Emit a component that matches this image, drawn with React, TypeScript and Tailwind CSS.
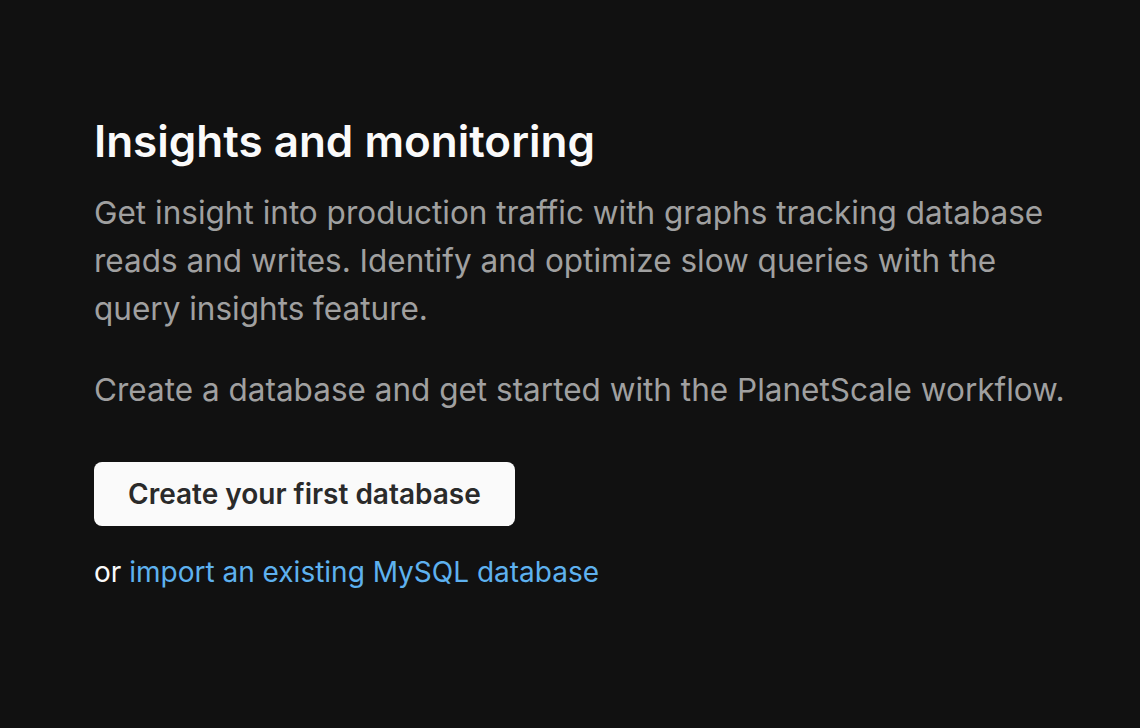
import React from "react";

export default function App() {
  return (
    <div
      className="w-[1140px] h-[728px] bg-[#111111] pl-[94px] pt-[113px]"
      style={{ fontFamily: "Inter, 'Noto Sans', sans-serif" }}
    >
      <h1 className="text-[44px] leading-[56px] font-semibold text-[#fafafa]">
        Insights and monitoring
      </h1>
      <p className="mt-[20px] w-[970px] text-[31.5px] leading-[48px] text-[#a0a0a0]">
        Get insight into production traffic with graphs tracking database reads and writes. Identify and optimize slow queries with the query insights feature.
      </p>
      <p className="mt-[33px] whitespace-nowrap text-[31.5px] leading-[48px] text-[#a0a0a0]">
        Create a database and get started with the PlanetScale workflow.
      </p>
      <button className="mt-[48px] h-[64px] px-[34px] rounded-[8px] bg-[#fafafa] text-[#2a2a2a] text-[28px] font-semibold">
        Create your first database
      </button>
      <p className="mt-[22px] text-[28px] leading-[48px] text-[#fafafa]">
        or <a className="text-[#5eb1ef]">import an existing MySQL database</a>
      </p>
    </div>
  );
}
